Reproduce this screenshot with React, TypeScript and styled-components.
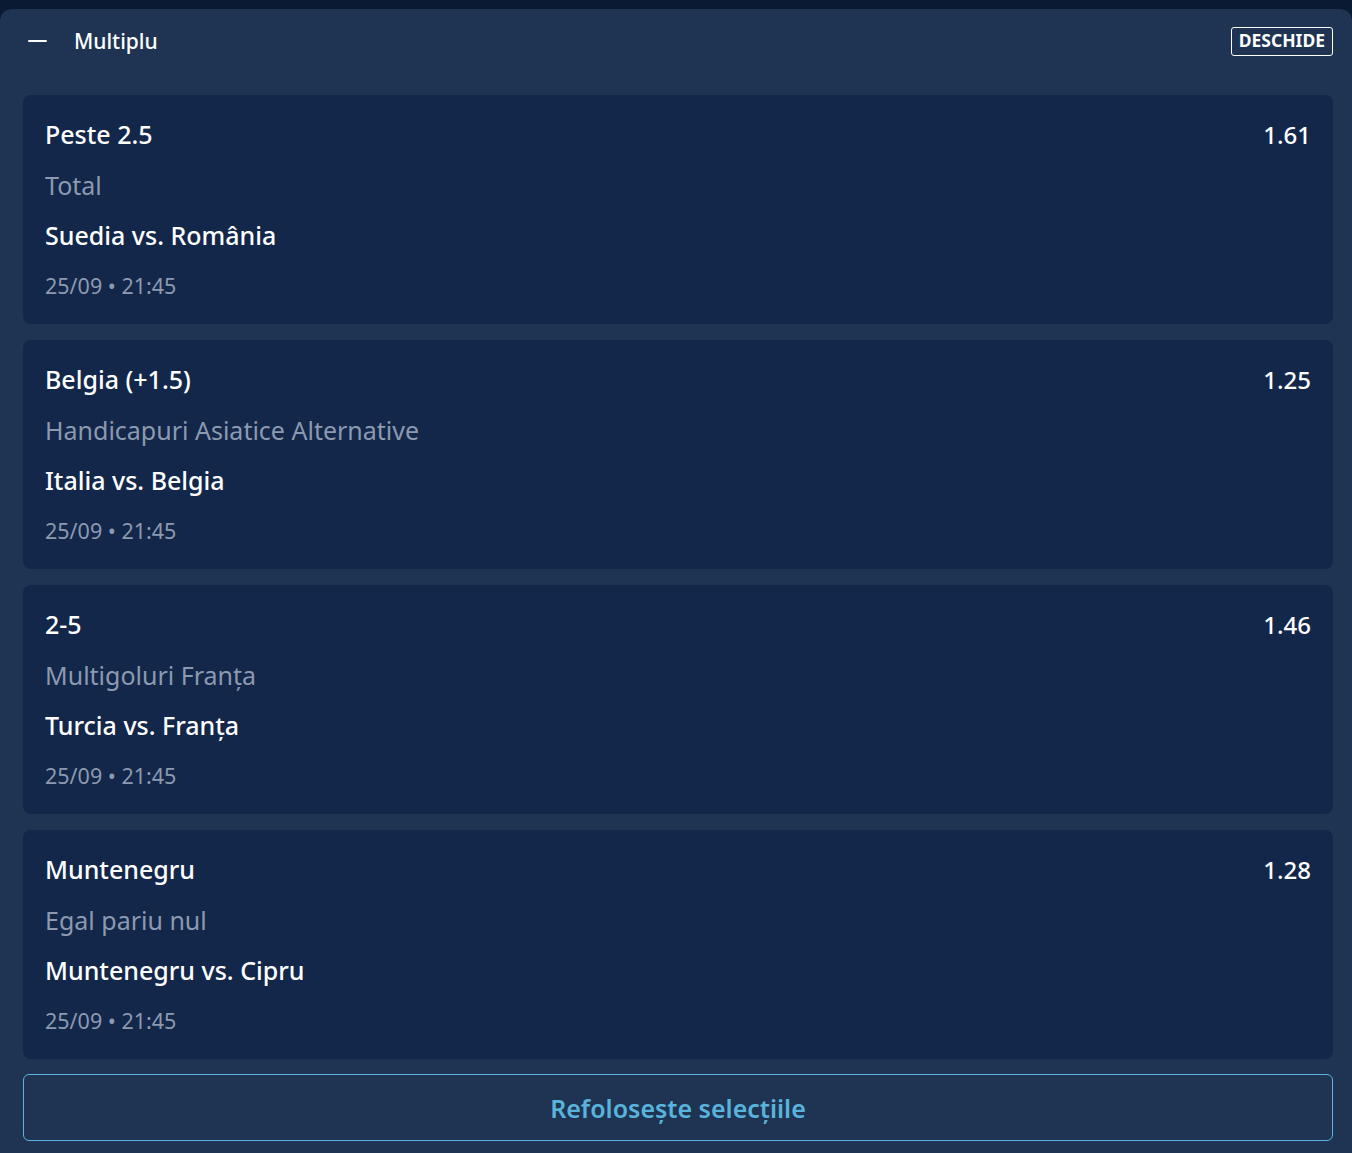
import React from "react";
import styled, { createGlobalStyle } from "styled-components";

const Global = createGlobalStyle`
  html, body { margin: 0; padding: 0; background: #0b1a33; }
  body { font-family: "Noto Sans", "Open Sans", sans-serif; -webkit-font-smoothing: antialiased; }
`;

const Page = styled.div`
  padding-top: 9px;
  width: 1352px;
  height: 1153px;
  box-sizing: border-box;
  overflow: hidden;
`;

const Panel = styled.section`
  background: #1e3452;
  border-radius: 12px 12px 0 0;
  padding: 0 19px 0 23px;
  min-height: 1144px;
  box-sizing: border-box;
`;

const Header = styled.header`
  display: flex;
  align-items: center;
  height: 64px;
  margin-left: -23px;
  margin-right: -19px;
  padding: 0 19px 0 28px;
`;

const Minus = styled.span`
  display: block;
  width: 19px;
  height: 2px;
  background: #ffffff;
  border-radius: 1px;
  margin-right: 27px;
`;

const Title = styled.h2`
  margin: 0;
  flex: 1;
  color: #ffffff;
  font-size: 21px;
  font-weight: 500;
  line-height: 1;
`;

const OpenButton = styled.button`
  font-family: inherit;
  background: transparent;
  color: #ffffff;
  border: 1px solid #ffffff;
  border-radius: 3px;
  font-size: 17.5px;
  font-weight: 700;
  height: 29px;
  padding: 0 7px;
  line-height: 1;
`;

const List = styled.div`
  display: flex;
  flex-direction: column;
  gap: 16px;
  margin-top: 22px;
`;

const Card = styled.article`
  background: #13274a;
  border-radius: 8px;
  padding: 21px 22px 0 22px;
  height: 229px;
  box-sizing: border-box;
  display: flex;
  flex-direction: column;
`;

const Row = styled.div`
  display: flex;
  justify-content: space-between;
  align-items: center;
  height: 36px;
`;

const Line = styled.div<{ $tone: "main" | "muted"; $size?: number }>`
  color: ${(p) => (p.$tone === "main" ? "#ffffff" : "#8b9ab0")};
  font-size: ${(p) => p.$size ?? 25}px;
  font-weight: ${(p) => (p.$tone === "main" ? 500 : 400)};
  line-height: 36px;
  height: 36px;
  margin-top: 14.5px;
  white-space: nowrap;
`;

const Pick = styled.span`
  color: #ffffff;
  font-size: 25px;
  font-weight: 500;
`;

const Odds = styled.span`
  color: #ffffff;
  font-size: 24px;
  font-weight: 500;
`;

const Reuse = styled.button`
  font-family: inherit;
  margin-top: 15px;
  width: 100%;
  height: 67px;
  background: transparent;
  border: 1px solid #5cb3e0;
  border-radius: 6px;
  color: #5ab3dc;
  font-size: 25px;
  font-weight: 600;
`;

type Sel = { pick: string; odds: string; market: string; event: string; time: string };

const selections: Sel[] = [
  { pick: "Peste 2.5", odds: "1.61", market: "Total", event: "Suedia vs. România", time: "25/09 • 21:45" },
  { pick: "Belgia (+1.5)", odds: "1.25", market: "Handicapuri Asiatice Alternative", event: "Italia vs. Belgia", time: "25/09 • 21:45" },
  { pick: "2-5", odds: "1.46", market: "Multigoluri Franța", event: "Turcia vs. Franța", time: "25/09 • 21:45" },
  { pick: "Muntenegru", odds: "1.28", market: "Egal pariu nul", event: "Muntenegru vs. Cipru", time: "25/09 • 21:45" },
];

export default function App() {
  return (
    <Page>
      <Global />
      <Panel>
        <Header>
          <Minus />
          <Title>Multiplu</Title>
          <OpenButton>DESCHIDE</OpenButton>
        </Header>
        <List>
          {selections.map((s) => (
            <Card key={s.pick}>
              <Row>
                <Pick>{s.pick}</Pick>
                <Odds>{s.odds}</Odds>
              </Row>
              <Line $tone="muted">{s.market}</Line>
              <Line $tone="main">{s.event}</Line>
              <Line $tone="muted" $size={21.5}>{s.time}</Line>
            </Card>
          ))}
        </List>
        <Reuse>Refolosește selecțiile</Reuse>
      </Panel>
    </Page>
  );
}
